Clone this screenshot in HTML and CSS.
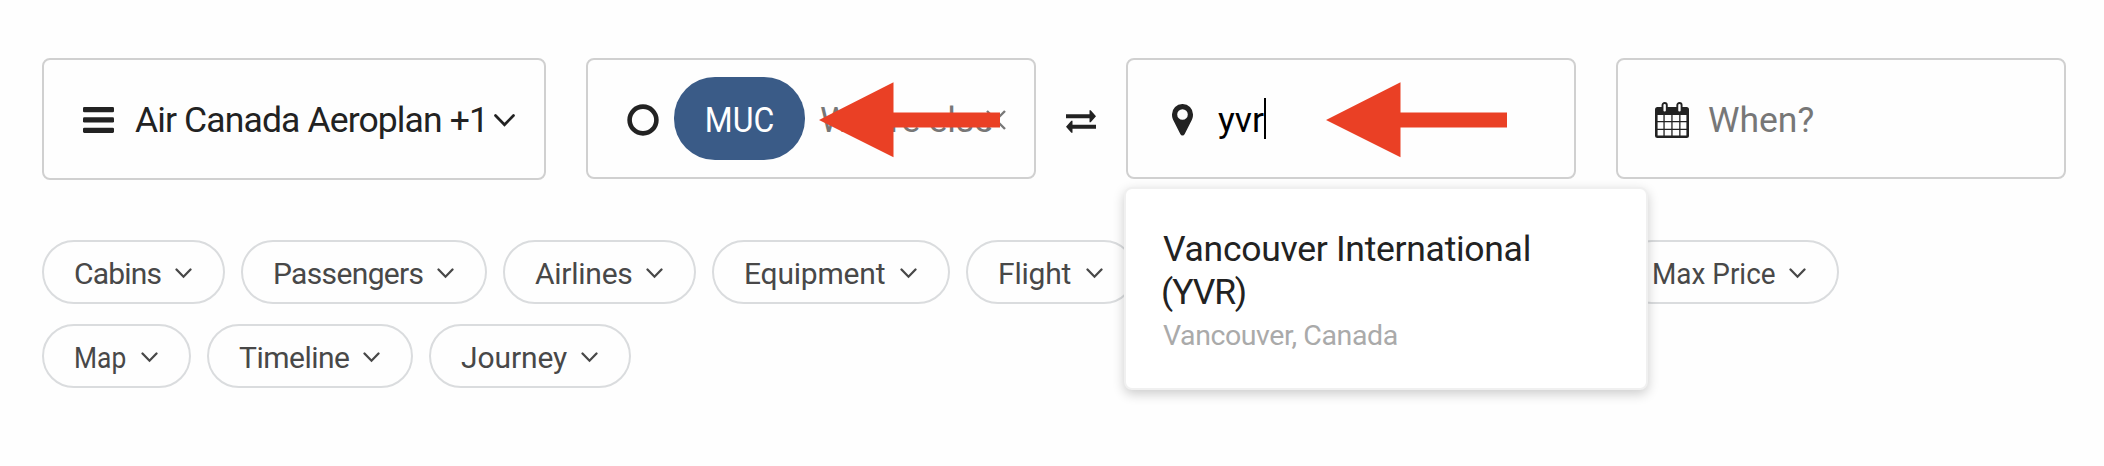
FILE: index.html
```
<!DOCTYPE html>
<html lang="en">
<head>
<meta charset="utf-8">
<title>Flight search</title>
<link rel="stylesheet" href="styles.css">
</head>
<body>
<svg class="defs" width="0" height="0">
  <symbol id="chev" viewBox="0 0 17 11"><path d="M1.5 1.5 8.5 8.7 15.5 1.5" fill="none" stroke="currentColor" stroke-width="2.3" stroke-linecap="round" stroke-linejoin="miter"/></symbol>
  <symbol id="arrow" viewBox="0 0 181 76"><path d="M0 38 74.500 .3V30.500H181V45.500H74.500V75.300Z" fill="#ea4025"/></symbol>
</svg>
<main class="page">
  <section class="search">
    <div class="field programs">
      <svg class="icon menu" viewBox="0 0 31 26"><g fill="#222"><rect width="31" height="5.200" rx="1.300"/><rect y="10.300" width="31" height="5.200" rx="1.300"/><rect y="20.700" width="31" height="5.200" rx="1.300"/></g></svg>
      <span class="text program-name">Air Canada Aeroplan +1</span>
      <svg class="program-chev" viewBox="0 0 21 13"><path d="M1.500 1.500 10.500 10.700 19.500 1.500" fill="none" stroke="#222" stroke-width="2.700" stroke-linecap="round"/></svg>
    </div>
    <div class="field origin">
      <svg class="icon circle" viewBox="0 0 32 32"><circle cx="16" cy="16" r="13.400" fill="none" stroke="#222" stroke-width="4.600"/></svg>
      <span class="tag"><span class="tag-text">MUC</span></span>
      <span class="text placeholder origin-input">Where else</span>
      <svg class="clear" viewBox="0 0 20 20"><path d="M1 1 19 19M19 1 1 19" stroke="#777" stroke-width="2.400"/></svg>
      <svg class="arrow"><use href="#arrow"/></svg>
    </div>
    <svg class="swap" viewBox="0 0 30 23"><path d="M0 4.200H23.500V.2H24.700L30 6.200 24.700 12.200H23.500V8.200H0ZM30 14.800H6.500V10.800H5.300L0 16.800 5.300 22.800H6.500V18.800H30Z" fill="#222"/></svg>
    <div class="field destination">
      <svg class="icon pin" viewBox="0 0 21 32"><path d="M10.500 0A10.400 10.400 0 0 0 0 10.500C0 13 .5 14.400 1.200 16L8.300 30Q9 31.500 10.500 31.500T12.700 30L19.800 16C20.500 14.400 21 13 21 10.500A10.400 10.400 0 0 0 10.500 0ZM10.500 5.200A5.300 5.300 0 1 1 10.500 15.800 5.300 5.300 0 0 1 10.500 5.200Z" fill="#222" fill-rule="evenodd"/></svg>
      <span class="typed">yvr</span><span class="caret"></span>
      <svg class="arrow"><use href="#arrow"/></svg>
      <div class="dropdown">
        <div class="airport">Vancouver International<br><span class="code">(YVR)</span></div>
        <div class="city"><span>Vancouver, Canada</span></div>
      </div>
    </div>
    <div class="field dates">
      <svg class="icon calendar" viewBox="0 0 34 36"><path d="M2.500 5H31.500Q34 5 34 7.500V33.500Q34 36 31.500 36H2.500Q0 36 0 33.500V7.500Q0 5 2.500 5Z" fill="#222"/><g fill="#fefefe"><path d="M2.600 13H8.400V19H2.600ZM9.700 13H16.300V19H9.700ZM17.600 13H24.200V19H17.600ZM25.500 13H31.400V19H25.500ZM2.600 20.300H8.400V26.700H2.600ZM9.700 20.300H16.300V26.700H9.700ZM17.600 20.300H24.200V26.700H17.600ZM25.500 20.300H31.400V26.700H25.500ZM2.600 28H8.400V33.600H2.600ZM9.700 28H16.300V33.600H9.700ZM17.600 28H24.200V33.600H17.600ZM25.500 28H31.400V33.600H25.500Z"/></g><g fill="#fefefe" stroke="#222" stroke-width="1.900"><rect x="7.500" y="1" width="4.300" height="9.500" rx="2.100"/><rect x="22.300" y="1" width="4.300" height="9.500" rx="2.100"/></g></svg>
      <span class="text placeholder when">When?</span>
    </div>
  </section>
  <section class="filters">
    <div class="row">
      <div class="chip cabins"><span>Cabins</span><svg><use href="#chev"/></svg></div>
      <div class="chip passengers"><span>Passengers</span><svg><use href="#chev"/></svg></div>
      <div class="chip airlines"><span>Airlines</span><svg><use href="#chev"/></svg></div>
      <div class="chip equipment"><span>Equipment</span><svg><use href="#chev"/></svg></div>
      <div class="chip flight"><span>Flight</span><svg><use href="#chev"/></svg></div>
      <div class="chip price"><span>Max Price</span><svg><use href="#chev"/></svg></div>
    </div>
    <div class="row">
      <div class="chip map"><span>Map</span><svg><use href="#chev"/></svg></div>
      <div class="chip timeline"><span>Timeline</span><svg><use href="#chev"/></svg></div>
      <div class="chip journey"><span>Journey</span><svg><use href="#chev"/></svg></div>
    </div>
  </section>
</main>
</body>
</html>
```

FILE: styles.css
```
* { box-sizing: border-box; }
body {
  margin: 0;
  background: #fefefe;
  color: #222;
  font-family: Roboto, "Liberation Sans", sans-serif;
  font-size: 35.5px;
  overflow: hidden;
}
.defs { position: absolute; }
svg { display: block; flex: none; }
.page { padding: 58px 38px 0 42px; height: 466px; }
.search { display: flex; align-items: flex-start; height: 122px; }
.field {
  position: relative;
  display: flex;
  align-items: center;
  flex: none;
  width: 450px;
  height: 121px;
  border: 2px solid #d0d0d0;
  border-radius: 8px;
  padding-top: 2px;
  white-space: nowrap;
}
.text, .typed { flex: none; line-height: 42px; }
.programs { width: 504px; height: 122px; padding-left: 39px; margin-right: 40px; }
.menu { width: 31px; height: 26px; }
.program-name { width: 349px; margin-left: 21px; letter-spacing: -.88px; }
.program-chev { width: 21px; height: 13px; margin-left: 10px; }
.origin { padding-left: 39px; margin-right: 30px; }
.circle { width: 32px; height: 32px; }
.tag {
  width: 131px;
  height: 83px;
  margin: -3px 0 0 15px;
  border-radius: 41px;
  background: #3a5b87;
  color: #fff;
  display: flex;
  align-items: center;
  justify-content: center;
  padding-top: 3px;
}
.tag-text { transform: scaleX(.9); }
.placeholder { color: #777; }
.origin-input { width: 165px; margin-left: 15px; letter-spacing: -.1px; }
.clear { width: 20px; height: 20px; margin-left: 1px; }
.arrow { position: absolute; width: 181px; height: 76px; top: 22px; left: 231px; }
.destination .arrow { left: 198px; }
.swap { width: 30px; height: 23px; margin: 52px 30px 0 0; }
.destination { padding-left: 44px; margin-right: 40px; }
.pin { width: 21px; height: 32px; }
.typed { width: 46px; margin-left: 25px; color: #000; }
.caret { width: 2px; height: 41px; background: #000; margin-top: -3px; }
.dates { padding-left: 37px; }
.calendar { width: 34px; height: 36px; }
.when { margin-left: 19px; }
.dropdown {
  position: absolute;
  z-index: 5;
  left: -4px;
  top: 127px;
  width: 524px;
  height: 203px;
  padding: 39px 37px;
  border: 2px solid #f0f0f0;
  border-radius: 8px;
  background: #fff;
  box-shadow: 0 4px 12px rgba(0, 0, 0, .2);
}
.airport { line-height: 43px; letter-spacing: -.28px; }
.code { margin-left: -2px; letter-spacing: -1.2px; }
.city { margin-top: 3px; color: #aaa; font-size: 28.5px; line-height: 38px; letter-spacing: -.42px; }
.filters { display: grid; gap: 20px; margin-top: 60px; }
.row { display: flex; gap: 16px; }
.chip {
  display: flex;
  align-items: center;
  justify-content: space-between;
  flex: none;
  height: 64px;
  padding: 3px 31px 0 30px;
  border: 2px solid #dadcde;
  border-radius: 32px;
  color: #484848;
  font-size: 30px;
  white-space: nowrap;
}
.chip svg { width: 17px; height: 11px; }
.chip span { transform-origin: left center; }
.cabins { width: 183px; letter-spacing: -.8px; }
.passengers { width: 246px; letter-spacing: -.65px; }
.airlines { width: 193px; letter-spacing: -.25px; }
.equipment { width: 238px; letter-spacing: -.2px; }
.flight { width: 170px; letter-spacing: -.2px; }
.price { width: 219px; margin-left: 468px; }
.price span { transform: scaleX(.93); }
.map { width: 149px; }
.map span { transform: scaleX(.88); }
.timeline { width: 206px; letter-spacing: -.5px; }
.journey { width: 202px; letter-spacing: -.1px; }
```
